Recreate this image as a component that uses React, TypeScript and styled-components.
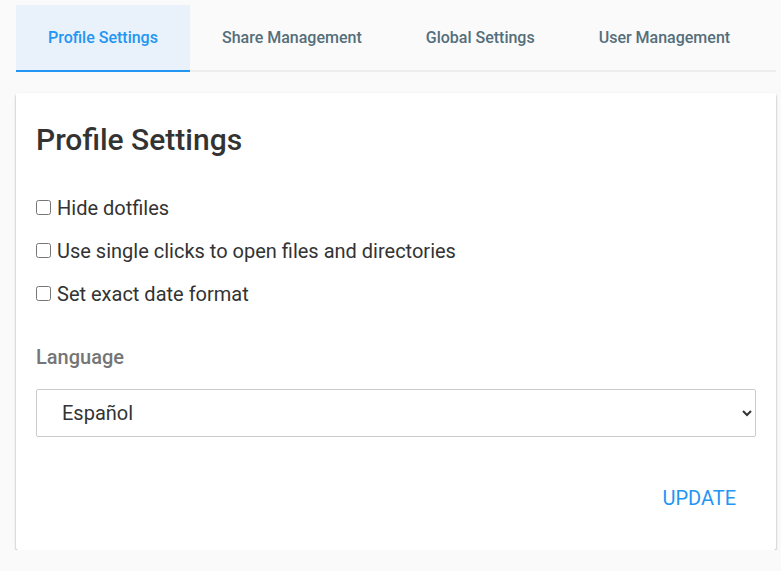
import styled, { createGlobalStyle } from "styled-components";

const GlobalStyle = createGlobalStyle`
  html, body {
    margin: 0;
    padding: 0;
    background: #fafafa;
    font-family: Roboto, "Liberation Sans", sans-serif;
    color: #333;
  }
`;

const Page = styled.div`
  padding: 5px 5px 0 16px;
`;

const TabBar = styled.ul`
  display: flex;
  margin: 0;
  padding: 0;
  list-style: none;
  border-bottom: 2px solid #eee;
`;

const Tab = styled.li<{ $active?: boolean }>`
  height: 65px;
  display: flex;
  align-items: center;
  padding: 0 32px;
  margin-bottom: -2px;
  font-size: 16px;
  font-weight: 500;
  color: ${({ $active }) => ($active ? "#2196f3" : "#546e7a")};
  background: ${({ $active }) => ($active ? "#e9f1fa" : "transparent")};
  border-bottom: 2px solid ${({ $active }) => ($active ? "#2196f3" : "transparent")};
  cursor: pointer;
`;

const Card = styled.form`
  margin-top: 21px;
  background: #fff;
  border-radius: 2px;
  box-shadow: 0 1px 3px rgba(0, 0, 0, 0.12), 0 2px 2px rgba(0, 0, 0, 0.3);
`;

const CardTitle = styled.div`
  padding: 29px 20px 0;
  h2 {
    margin: 0;
    font-size: 30px;
    font-weight: 500;
    color: #333;
    line-height: 1.17;
  }
`;

const CardContent = styled.div`
  padding: 29px 20px 0;
`;

const CheckRow = styled.label`
  display: flex;
  align-items: center;
  height: 43px;
  font-size: 20px;
  color: #333;
  input {
    margin: 0 6px 0 0;
    width: 15px;
    height: 15px;
  }
`;

const Label = styled.p`
  margin: 30px 0 0;
  font-size: 20px;
  font-weight: 500;
  color: #757575;
`;

const Select = styled.select`
  display: block;
  width: 100%;
  height: 48px;
  margin-top: 20px;
  padding: 0 21px;
  font-family: Roboto, "Liberation Sans", sans-serif;
  font-size: 20px;
  color: #333;
  background: #fff;
  border: 1px solid #ccc;
  border-radius: 2px;
`;

const Actions = styled.div`
  display: flex;
  justify-content: flex-end;
  padding: 43px 20px 34px;
`;

const FlatButton = styled.button`
  border: 0;
  background: transparent;
  padding: 6px 20px;
  font-family: Roboto, "Liberation Sans", sans-serif;
  font-size: 20px;
  color: #2196f3;
  text-transform: uppercase;
  cursor: pointer;
`;

const tabs = ["Profile Settings", "Share Management", "Global Settings", "User Management"];

export default function App() {
  return (
    <Page>
      <GlobalStyle />
      <TabBar>
        {tabs.map((t, i) => (
          <Tab key={t} $active={i === 0}>
            {t}
          </Tab>
        ))}
      </TabBar>
      <Card onSubmit={(e) => e.preventDefault()}>
        <CardTitle>
          <h2>Profile Settings</h2>
        </CardTitle>
        <CardContent>
          <CheckRow>
            <input type="checkbox" /> Hide dotfiles
          </CheckRow>
          <CheckRow>
            <input type="checkbox" /> Use single clicks to open files and directories
          </CheckRow>
          <CheckRow>
            <input type="checkbox" /> Set exact date format
          </CheckRow>
          <Label>Language</Label>
          <Select defaultValue="es">
            <option value="en">English</option>
            <option value="es">Español</option>
            <option value="fr">Français</option>
          </Select>
        </CardContent>
        <Actions>
          <FlatButton type="submit">Update</FlatButton>
        </Actions>
      </Card>
    </Page>
  );
}
